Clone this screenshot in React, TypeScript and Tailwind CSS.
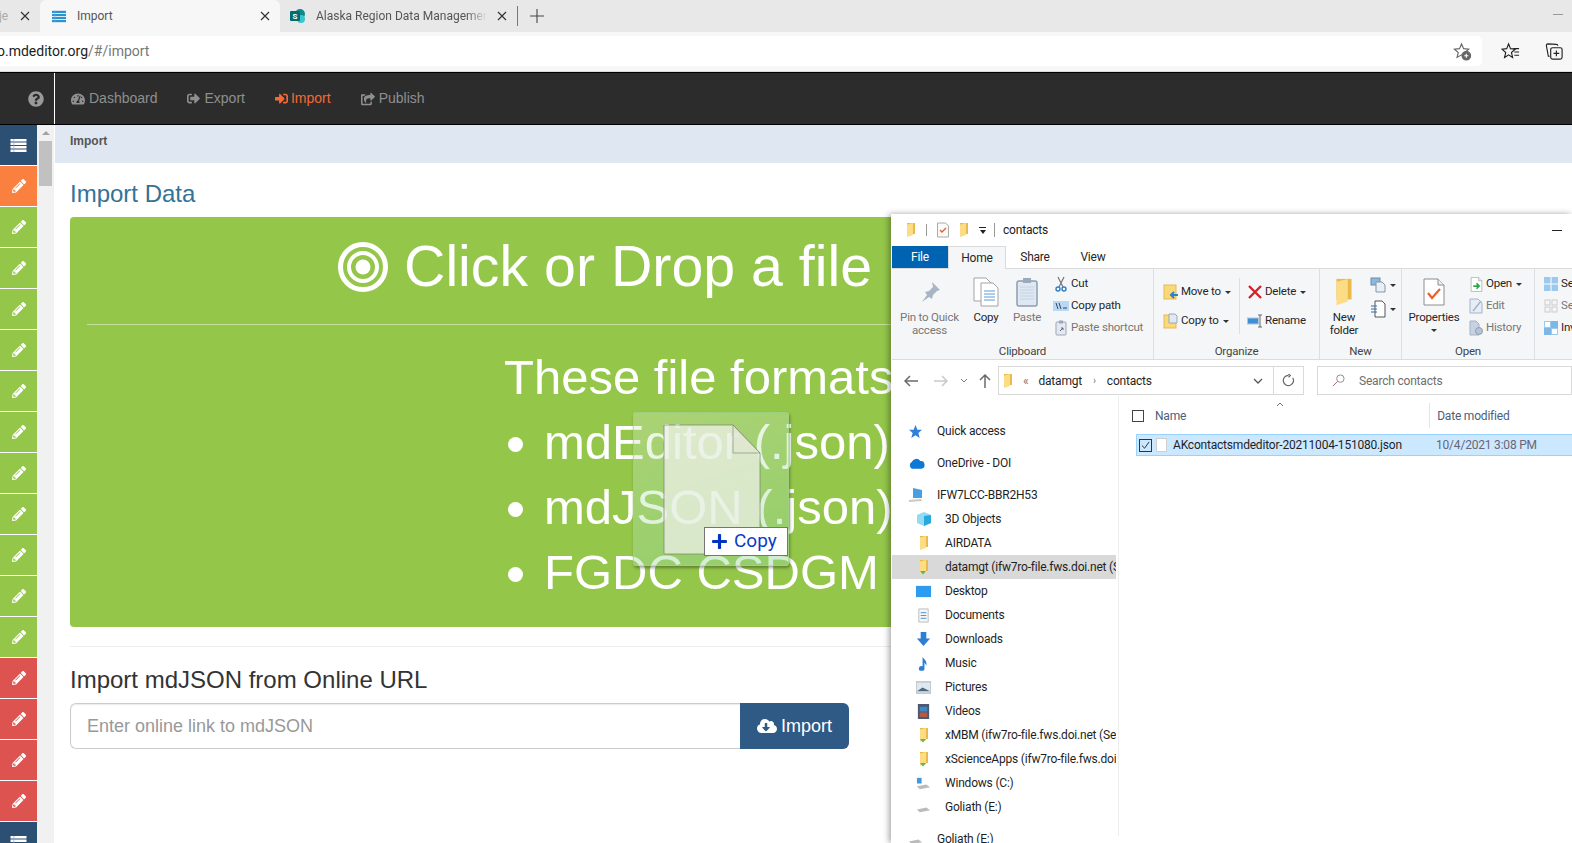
import type { ReactNode } from 'react';
import {
  FaCloudDownloadAlt,
  FaPencilAlt,
  FaPlus,
  FaQuestionCircle,
  FaShareSquare,
  FaSignInAlt,
  FaSignOutAlt,
  FaTachometerAlt,
} from 'react-icons/fa';

const tiles = [
  ...Array(1).fill('orange'),
  ...Array(11).fill('green'),
  ...Array(4).fill('red'),
];

function ListIcon({ className }: { className?: string }) {
  return (
    <svg viewBox="0 0 16 13" className={className} fill="currentColor">
      <rect x="0" y="0" width="16" height="2.500" />
      <rect x="0" y="3.500" width="16" height="2.500" />
      <rect x="0" y="7" width="16" height="2.500" />
      <rect x="0" y="10.500" width="16" height="2.500" />
      <path d="M3 0h.7v13H3z" fill="#7fa7d9" />
    </svg>
  );
}

function Folder({ className = 'w-4 h-4', mapped = false }: { className?: string; mapped?: boolean }) {
  return (
    <svg viewBox="0 0 16 16" className={className}>
      <path d="M4 1h8v11H4z" fill="#e9b949" />
      <path d="M4 2.500 10 1v12l-6 2z" fill="#fcdc85" />
      {mapped && <path d="M4 12h6l-3 3.500z" fill="#5cb85c" />}
    </svg>
  );
}

function CloseIcon() {
  return (
    <svg viewBox="0 0 10 10" className="w-[10px] h-[10px] shrink-0" stroke="#333" strokeWidth="1.2">
      <path d="M1 1l8 8M9 1l-8 8" />
    </svg>
  );
}

function Caret() {
  return <span className="inline-block ml-1 align-middle border-x-[3px] border-t-[3px] border-x-transparent border-t-[#333]" />;
}

function Small({ icon, label, disabled, caret }: { icon: ReactNode; label: string; disabled?: boolean; caret?: boolean }) {
  return (
    <div className={`flex items-center h-[22px] shrink-0 whitespace-nowrap ${disabled ? 'text-[#777]' : 'text-[#262626]'}`}>
      <span className="w-[20px] flex justify-center shrink-0">{icon}</span>
      <span>{label}</span>
      {caret && <Caret />}
    </div>
  );
}

function Large({ icon, lines, width, disabled }: { icon: ReactNode; lines: string[]; width: string; disabled?: boolean }) {
  return (
    <div className={`flex flex-col items-center shrink-0 ${width} ${disabled ? 'text-[#777]' : 'text-[#262626]'}`}>
      <div className="h-[38px] flex items-center justify-center">{icon}</div>
      {lines.map((l) => (
        <div key={l} className="h-[13px] leading-[13px] whitespace-nowrap">{l}</div>
      ))}
    </div>
  );
}

function Group({ label, width, children }: { label: string; width: string; children: ReactNode }) {
  return (
    <div className={`flex flex-col shrink-0 h-full border-r border-[#dcdfe3] ${width}`}>
      <div className="flex flex-1 pt-[4px] min-h-0">{children}</div>
      <div className="h-[18px] leading-[20px] text-center text-[#444]">{label}</div>
    </div>
  );
}

function PaperIcon({ children, className = 'w-[24px] h-[28px]' }: { children?: ReactNode; className?: string }) {
  return (
    <svg viewBox="0 0 24 28" className={className}>
      <path d="M2 1h14l6 6v20H2z" fill="#fff" stroke="#8c8c8c" />
      <path d="M16 1v6h6" fill="#eee" stroke="#8c8c8c" />
      {children}
    </svg>
  );
}

function NavRow({ icon, label, deep, active, mt }: { icon: ReactNode; label: string; deep?: boolean; active?: boolean; mt?: string }) {
  return (
    <div className={`flex items-center h-[24px] whitespace-nowrap overflow-hidden text-[#1f1f1f] ${active ? 'bg-[#d9d9d9]' : ''} ${mt ?? ''} ${deep ? 'pl-[24px]' : 'pl-[16px]'}`}>
      <span className="w-[30px] shrink-0 flex justify-start">{icon}</span>
      <span className="-ml-[1px]">{label}</span>
    </div>
  );
}

function Explorer() {
  return (
    <div className="absolute left-[891px] top-[214px] w-[681px] h-[629px] bg-white shadow-[-2px_0_6px_rgba(0,0,0,0.35)] font-[Roboto] text-[12px] tracking-[-0.2px] overflow-hidden">
      <div className="flex items-center h-[32px] pl-[12px] text-[#1a1a1a]">
        <Folder className="w-[16px] h-[16px]" />
        <span className="ml-[7px] w-px h-[12px] bg-[#999]" />
        <svg viewBox="0 0 14 16" className="ml-[9px] w-[14px] h-[16px]">
          <path d="M1.500 1h8l3 3v11h-11z" fill="#fafafa" stroke="#aaa" />
          <path d="M4 8l2 2 4-4" fill="none" stroke="#e8602c" strokeWidth="1.4" />
        </svg>
        <Folder className="ml-[6px] w-[16px] h-[16px]" />
        <span className="ml-[7px] flex flex-col items-center gap-[2px]">
          <span className="w-[7px] h-px bg-[#222]" />
          <span className="border-x-[3.5px] border-t-[4px] border-x-transparent border-t-[#222]" />
        </span>
        <span className="ml-[8px] w-px h-[14px] bg-[#999]" />
        <span className="ml-[8px]">contacts</span>
        <span className="ml-auto mr-[10px] w-[10px] h-px bg-[#222]" />
      </div>

      <div className="flex h-[23px] ml-[1px] items-stretch border-b border-[#dadbdc]">
        <div className="w-[56px] bg-[#0063b1] text-white flex items-center justify-center">File</div>
        <div className="w-[58px] bg-[#f5f6f7] border-x border-t border-[#dadbdc] -mb-px flex items-center justify-center text-[#262626]">Home</div>
        <div className="w-[58px] flex items-center justify-center text-[#262626]">Share</div>
        <div className="w-[58px] flex items-center justify-center text-[#262626]">View</div>
      </div>

      <div className="flex h-[91px] ml-[1px] bg-[#f5f6f7] border-b border-[#dadbdc] text-[11.5px]">
        <Group label="Clipboard" width="w-[262px]">
          <Large
            width="w-[75px]"
            disabled
            lines={['Pin to Quick', 'access']}
            icon={
              <svg viewBox="0 0 24 24" className="w-[24px] h-[24px]">
                <path d="M14 2l8 8-3 1-4 4-1 4-3-2-7 5 5-7-2-3 4-1 4-4z" fill="#a9b4c4" />
              </svg>
            }
          />
          <Large
            width="w-[38px]"
            lines={['Copy']}
            icon={
              <svg viewBox="0 0 26 30" className="w-[26px] h-[30px]">
                <path d="M1 1h12l5 5v18H1z" fill="#fff" stroke="#a3a3a3" />
                <path d="M8 6h12l5 5v18H8z" fill="#fff" stroke="#a3a3a3" />
                <path d="M11 14h11M11 17h11M11 20h11M11 23h11" stroke="#5b9bd5" />
              </svg>
            }
          />
          <Large
            width="w-[44px]"
            disabled
            lines={['Paste']}
            icon={
              <svg viewBox="0 0 24 30" className="w-[24px] h-[30px]">
                <rect x="2" y="4" width="20" height="25" rx="2" fill="#dfe7f2" stroke="#8d9db3" strokeWidth="1.5" />
                <rect x="8" y="1" width="8" height="5" fill="#9aa9bd" />
                <path d="M5 10h14M5 13h14M5 16h14M5 19h14M5 22h14" stroke="#c5d3e5" />
              </svg>
            }
          />
          <div className="flex flex-col ml-[2px]">
            <Small
              label="Cut"
              icon={
                <svg viewBox="0 0 14 16" className="w-[14px] h-[16px]" fill="none">
                  <path d="M4 1l5 10M10 1L5 11" stroke="#777" strokeWidth="1.2" />
                  <circle cx="4" cy="13" r="2" stroke="#2f80c8" strokeWidth="1.4" />
                  <circle cx="10" cy="13" r="2" stroke="#2f80c8" strokeWidth="1.4" />
                </svg>
              }
            />
            <Small
              label="Copy path"
              icon={
                <svg viewBox="0 0 16 10" className="w-[16px] h-[10px]">
                  <rect width="16" height="10" fill="#b9d8f3" />
                  <path d="M3 2l2 6M6 2l2 6M10 7h4" stroke="#33475e" />
                </svg>
              }
            />
            <Small
              label="Paste shortcut"
              disabled
              icon={
                <svg viewBox="0 0 12 16" className="w-[12px] h-[16px]">
                  <rect x="1" y="2" width="10" height="13" rx="1" fill="#e4e9f0" stroke="#9aa7b8" />
                  <rect x="4" y="0.500" width="4" height="3" fill="#9aa7b8" />
                  <path d="M5 11l3-3M6 8h2v2" stroke="#667" fill="none" />
                </svg>
              }
            />
          </div>
        </Group>

        <Group label="Organize" width="w-[166px]">
          <div className="flex flex-col w-[85px] pl-[7px] pt-[8px] gap-[7px] shrink-0">
            <Small
              label="Move to"
              caret
              icon={
                <svg viewBox="0 0 16 16" className="w-[16px] h-[16px]">
                  <rect x="1" y="1" width="12" height="14" fill="#fbd878" stroke="#e3bb58" />
                  <path d="M15 11H8M11 8l-3 3 3 3" stroke="#2f80c8" strokeWidth="2" fill="none" />
                </svg>
              }
            />
            <Small
              label="Copy to"
              caret
              icon={
                <svg viewBox="0 0 16 16" className="w-[16px] h-[16px]">
                  <rect x="1" y="2" width="12" height="13" fill="#fbd878" stroke="#e3bb58" />
                  <path d="M6 1h6l2 2v7H6z" fill="#dfe9f5" stroke="#9aa7b8" />
                </svg>
              }
            />
          </div>
          <div className="flex flex-col pl-[5px] pt-[3px] mt-[5px] gap-[7px] border-l border-[#dcdfe3] h-[56px]">
            <Small
              label="Delete"
              caret
              icon={
                <svg viewBox="0 0 14 14" className="w-[14px] h-[14px]" stroke="#d1232a" strokeWidth="2.4">
                  <path d="M1 1l12 12M13 1L1 13" />
                </svg>
              }
            />
            <Small
              label="Rename"
              icon={
                <svg viewBox="0 0 16 14" className="w-[16px] h-[14px]">
                  <rect x="0.500" y="4" width="11" height="6" fill="#3d8fd6" stroke="#b4c6da" />
                  <path d="M13 1v12M11 1h4M11 13h4" stroke="#666" />
                </svg>
              }
            />
          </div>
        </Group>

        <Group label="New" width="w-[82px]">
          <Large width="w-[48px]" lines={['New', 'folder']} icon={<Folder className="w-[30px] h-[34px]" />} />
          <div className="flex flex-col pl-[2px] pt-[2px] gap-[4px]">
            <div className="flex items-center h-[20px]">
              <svg viewBox="0 0 16 16" className="w-[16px] h-[16px]">
                <rect x="1" y="1" width="9" height="7" fill="#8db8dc" stroke="#6c8dab" />
                <path d="M6 5h6l3 3v7H6z" fill="#e9eff6" stroke="#8795a5" />
              </svg>
              <Caret />
            </div>
            <div className="flex items-center h-[20px]">
              <svg viewBox="0 0 16 18" className="w-[16px] h-[18px]">
                <path d="M5 1h7l3 3v13H5z" fill="#fff" stroke="#555" />
                <path d="M1 6h6M1 9h6M1 12h6" stroke="#2f6fa8" />
              </svg>
              <Caret />
            </div>
          </div>
        </Group>

        <Group label="Open" width="w-[133px]">
          <div className="flex flex-col items-center w-[64px] shrink-0 text-[#262626]">
            <Large
              width="w-[64px]"
              lines={['Properties']}
              icon={
                <PaperIcon className="w-[24px] h-[30px]">
                  <path d="M6 15l4 5 8-9" fill="none" stroke="#e8602c" strokeWidth="2.2" />
                </PaperIcon>
              }
            />
            <span className="mt-[5px] border-x-[3px] border-t-[3px] border-x-transparent border-t-[#333]" />
          </div>
          <div className="flex flex-col">
            <Small
              label="Open"
              caret
              icon={
                <PaperIcon className="w-[13px] h-[15px]">
                  <path d="M6 17h10M12 12l5 5-5 5" fill="none" stroke="#2aa84a" strokeWidth="3" />
                </PaperIcon>
              }
            />
            <Small
              label="Edit"
              disabled
              icon={
                <svg viewBox="0 0 14 16" className="w-[14px] h-[16px]">
                  <path d="M1 1h8l4 4v10H1z" fill="#e6edf6" stroke="#a4b4c8" />
                  <path d="M4 13l8-10" stroke="#a4b4c8" strokeWidth="1.5" />
                </svg>
              }
            />
            <Small
              label="History"
              disabled
              icon={
                <svg viewBox="0 0 14 16" className="w-[14px] h-[16px]">
                  <path d="M1 1h6l3 3v11H1z" fill="#c6d2e0" stroke="#a4b4c8" />
                  <circle cx="10" cy="11" r="3.500" fill="#b7c4d4" stroke="#8f9fb2" />
                </svg>
              }
            />
          </div>
        </Group>

        <div className="flex flex-col pl-[6px] pt-[4px] overflow-hidden">
          <Small
            label="Select all"
            icon={
              <svg viewBox="0 0 14 14" className="w-[14px] h-[14px]">
                <rect width="14" height="14" fill="#9cc9ee" />
                <path d="M7 0v14M0 7h14" stroke="#fff" />
              </svg>
            }
          />
          <Small
            label="Select none"
            disabled
            icon={
              <svg viewBox="0 0 14 14" className="w-[14px] h-[14px]" fill="none" stroke="#ccc">
                <rect x="1" y="1" width="5" height="5" />
                <rect x="8" y="1" width="5" height="5" />
                <rect x="1" y="8" width="5" height="5" />
                <rect x="8" y="8" width="5" height="5" />
              </svg>
            }
          />
          <Small
            label="Invert selection"
            icon={
              <svg viewBox="0 0 14 14" className="w-[14px] h-[14px]">
                <rect x="7" width="7" height="7" fill="#7db7e8" />
                <rect y="7" width="7" height="7" fill="#7db7e8" />
                <rect x="0.500" y="0.500" width="6" height="6" fill="#fff" stroke="#9cc9ee" />
                <rect x="7.500" y="7.500" width="6" height="6" fill="#fff" stroke="#9cc9ee" />
              </svg>
            }
          />
        </div>
      </div>

      <div className="flex items-start h-[36px] pt-[6px] text-[#333]">
        <div className="flex items-center h-[29px] w-[107px] pl-[13px] shrink-0">
          <svg viewBox="0 0 14 12" className="w-[14px] h-[12px]" stroke="#6b6b6b" strokeWidth="1.5" fill="none">
            <path d="M14 6H1M6 1L1 6l5 5" />
          </svg>
          <svg viewBox="0 0 14 12" className="ml-[16px] w-[14px] h-[12px]" stroke="#c9c9c9" strokeWidth="1.5" fill="none">
            <path d="M0 6h13M8 1l5 5-5 5" />
          </svg>
          <svg viewBox="0 0 8 5" className="ml-[12px] w-[8px] h-[5px]" stroke="#777" fill="none">
            <path d="M1 1l3 3 3-3" />
          </svg>
          <svg viewBox="0 0 12 14" className="ml-[11px] w-[12px] h-[14px]" stroke="#6b6b6b" strokeWidth="1.5" fill="none">
            <path d="M6 14V1M1 6l5-5 5 5" />
          </svg>
        </div>
        <div className="flex items-center w-[306px] h-[29px] border border-[#d9d9d9] shrink-0">
          <Folder className="ml-[1px] w-[16px] h-[16px]" />
          <span className="ml-[7px] text-[#777]">«</span>
          <span className="ml-[10px] text-[#1f1f1f]">datamgt</span>
          <span className="ml-[11px] text-[#777] text-[10px]">›</span>
          <span className="ml-[11px] text-[#1f1f1f]">contacts</span>
          <svg viewBox="0 0 10 6" className="ml-auto mr-[10px] w-[10px] h-[6px]" stroke="#555" strokeWidth="1.3" fill="none">
            <path d="M1 1l4 4 4-4" />
          </svg>
          <span className="w-[30px] h-full border-l border-[#d9d9d9] flex items-center justify-center">
            <svg viewBox="0 0 14 14" className="w-[13px] h-[13px]" stroke="#666" strokeWidth="1.3" fill="none">
              <path d="M11.500 4A5.500 5.500 0 1 1 7 1.500M7 0l2 1.700L7 3.500" />
            </svg>
          </span>
        </div>
        <div className="flex items-center ml-[13px] flex-1 h-[29px] border border-[#d9d9d9] pl-[14px] text-[#6e6e6e]">
          <svg viewBox="0 0 14 14" className="w-[13px] h-[13px]" stroke="#888" fill="none">
            <circle cx="9" cy="5" r="4" />
            <path d="M6 8l-5 5" stroke="#b56" />
          </svg>
          <span className="ml-[14px]">Search contacts</span>
        </div>
      </div>

      <div className="flex">
        <div className="w-[228px] shrink-0 pl-[1px] border-r border-[#eee] h-[440px]">
          <div className="pt-[23px] pr-[2px]">
            <NavRow
              label="Quick access"
              icon={
                <svg viewBox="0 0 16 16" className="w-[15px] h-[15px]">
                  <path d="M8 1l2 5h5l-4 3.500L12.500 15 8 12l-4.500 3L5 9.500 1 6h5z" fill="#2f80d8" />
                </svg>
              }
            />
            <NavRow
              mt="mt-[8px]"
              label="OneDrive - DOI"
              icon={
                <svg viewBox="0 0 18 12" className="w-[17px] h-[12px]">
                  <path d="M4 12a4 4 0 0 1 0-7 5 5 0 0 1 9-1 4 4 0 0 1 1 8z" fill="#0f78d4" />
                </svg>
              }
            />
            <NavRow
              mt="mt-[8px]"
              label="IFW7LCC-BBR2H53"
              icon={
                <svg viewBox="0 0 16 16" className="w-[16px] h-[16px]">
                  <path d="M5 1l9 2v8H5z" fill="#4a9fe0" />
                  <path d="M1 13l12-1 1 2-13 1z" fill="#c9c9c9" />
                </svg>
              }
            />
            <NavRow
              deep
              label="3D Objects"
              icon={
                <svg viewBox="0 0 16 16" className="w-[16px] h-[16px]">
                  <path d="M8 1l7 3v8l-7 3-7-3V4z" fill="#8fdcf3" />
                  <path d="M8 5l7-1v8l-7 3z" fill="#28a8dc" />
                </svg>
              }
            />
            <NavRow deep label="AIRDATA" icon={<Folder />} />
            <NavRow deep active label="datamgt (ifw7ro-file.fws.doi.net (Server))" icon={<Folder mapped />} />
            <NavRow
              deep
              label="Desktop"
              icon={
                <svg viewBox="0 0 16 16" className="w-[15px] h-[15px]">
                  <rect y="2" width="16" height="12" fill="#2e9bef" />
                </svg>
              }
            />
            <NavRow
              deep
              label="Documents"
              icon={
                <svg viewBox="0 0 16 16" className="w-[15px] h-[15px]">
                  <path d="M3 1h10v14H3z" fill="#f4f6f8" stroke="#bbb" />
                  <path d="M5 5h6M5 8h6M5 11h6" stroke="#4a8fc8" />
                </svg>
              }
            />
            <NavRow
              deep
              label="Downloads"
              icon={
                <svg viewBox="0 0 16 16" className="w-[15px] h-[15px]">
                  <path d="M5 0h6v7h4l-7 8-7-8h4z" fill="#2a7fd5" />
                </svg>
              }
            />
            <NavRow
              deep
              label="Music"
              icon={
                <svg viewBox="0 0 16 16" className="w-[15px] h-[15px]">
                  <path d="M7 1c2 3 5 4 4 9l-2-3v6a3 2.500 0 1 1-2-2z" fill="#2a7fd5" />
                </svg>
              }
            />
            <NavRow
              deep
              label="Pictures"
              icon={
                <svg viewBox="0 0 16 16" className="w-[15px] h-[15px]">
                  <rect y="2" width="16" height="12" fill="#dfe8f0" stroke="#aaa" />
                  <path d="M1 12l6-4 8 4z" fill="#4a6a82" />
                </svg>
              }
            />
            <NavRow
              deep
              label="Videos"
              icon={
                <svg viewBox="0 0 16 16" className="w-[15px] h-[15px]">
                  <rect x="2" y="0" width="12" height="16" fill="#4a5a70" />
                  <rect x="4" y="3" width="8" height="5" fill="#3f88c8" />
                  <rect x="4" y="9" width="8" height="5" fill="#b55a4a" />
                </svg>
              }
            />
            <NavRow deep label="xMBM (ifw7ro-file.fws.doi.net (Server))" icon={<Folder mapped />} />
            <NavRow deep label="xScienceApps (ifw7ro-file.fws.doi.net (Server))" icon={<Folder mapped />} />
            <NavRow
              deep
              label="Windows (C:)"
              icon={
                <svg viewBox="0 0 16 16" className="w-[15px] h-[15px]">
                  <path d="M1 2h5v6H1z" fill="#3f9ae0" />
                  <path d="M1 11l10-2 4 3-11 2z" fill="#bbb" />
                </svg>
              }
            />
            <NavRow
              deep
              label="Goliath (E:)"
              icon={
                <svg viewBox="0 0 16 16" className="w-[15px] h-[15px]">
                  <path d="M1 10l10-2 4 3-11 2z" fill="#bbb" />
                </svg>
              }
            />
            <NavRow
              mt="mt-[8px]"
              label="Goliath (E:)"
              icon={
                <svg viewBox="0 0 16 16" className="w-[15px] h-[15px]">
                  <path d="M1 10l10-2 4 3-11 2z" fill="#bbb" />
                </svg>
              }
            />
          </div>
        </div>

        <div className="flex-1 min-w-0 pt-[7px] pl-[13px]">
          <div className="flex items-center h-[25px] text-[#4c607a] relative">
            <span className="w-[12px] h-[12px] border border-[#444] shrink-0" />
            <span className="ml-[11px]">Name</span>
            <svg viewBox="0 0 8 5" className="absolute left-[144px] -top-[1px] w-[8px] h-[5px]" stroke="#777" fill="none">
              <path d="M1 4l3-3 3 3" />
            </svg>
            <span className="ml-[243px] pl-[7px] h-full flex items-center border-l border-[#e5e5e5]">Date modified</span>
          </div>
          <div className="flex items-center h-[22px] mt-[6px] ml-[4px] bg-[#cce8ff] border border-[#99d1ff] border-r-0">
            <span className="ml-[2px] w-[13px] h-[13px] border border-[#333] flex items-center justify-center shrink-0">
              <svg viewBox="0 0 10 10" className="w-[9px] h-[9px]" stroke="#222" fill="none">
                <path d="M1 5l3 3 5-7" />
              </svg>
            </span>
            <span className="ml-[4px] w-[11px] h-[14px] bg-white border border-[#cfcfcf] shrink-0" />
            <span className="ml-[6px] w-[263px] text-[#1f1f1f] whitespace-nowrap">AKcontactsmdeditor-20211004-151080.json</span>
            <span className="text-[#667]">10/4/2021 3:08 PM</span>
          </div>
        </div>
      </div>
    </div>
  );
}

function DragGhost() {
  return (
    <div className="absolute left-[633px] top-[412px] w-[156px] h-[154px] rounded-[3px] bg-[linear-gradient(160deg,rgba(215,235,195,0.35),rgba(150,215,150,0.45))] border border-[#9fd08a]/60 shadow-[1px_2px_3px_rgba(0,0,0,0.35)]">
      <svg viewBox="0 0 98 131" className="absolute left-[29px] top-[11px] w-[98px] h-[131px]">
        <path d="M1 1h69l27 28v101H1z" fill="rgba(238,240,232,0.75)" stroke="rgba(120,130,110,0.7)" />
        <path d="M70 1v28h27z" fill="rgba(225,230,210,0.7)" stroke="rgba(120,130,110,0.6)" />
      </svg>
      <div className="absolute left-[70px] top-[114px] w-[84px] h-[29px] bg-white border border-[#767676] flex items-center pl-[6px] font-[Roboto] text-[19px] text-[#0a3cc8]">
        <FaPlus className="w-[17px] h-[17px] text-[#0033c4]" />
        <span className="ml-[6px]">Copy</span>
      </div>
    </div>
  );
}

export default function App() {
  return (
    <div className="relative w-[1572px] h-[843px] overflow-hidden bg-white font-['Liberation_Sans',sans-serif]">
      <div className="flex items-end h-[32px] bg-[#e8e8e8] font-[Roboto] text-[12px] text-[#555]">
        <div className="flex items-center w-[40px] h-full">
          <span className="-ml-[1px] text-[#aaa]">je</span>
          <span className="ml-[12px]"><CloseIcon /></span>
        </div>
        <div className="flex items-center w-[240px] h-full bg-[#f7f7f7] rounded-t-[6px] pl-[12px] pr-[10px]">
          <ListIcon className="w-[14px] h-[13px] text-[#2b93d1]" />
          <span className="ml-[11px]">Import</span>
          <span className="ml-auto"><CloseIcon /></span>
        </div>
        <div className="flex items-center h-full pl-[10px] w-[232px]">
          <svg viewBox="0 0 16 16" className="w-[16px] h-[16px] shrink-0">
            <circle cx="10" cy="6" r="5" fill="#0f8a8a" />
            <circle cx="11" cy="11" r="4" fill="#37c6d0" />
            <rect x="0" y="3" width="10" height="10" rx="1" fill="#036c70" />
            <text x="5" y="11" fontSize="8" fontWeight="700" textAnchor="middle" fill="#fff">S</text>
          </svg>
          <span className="ml-[10px] w-[171px] overflow-hidden whitespace-nowrap [mask-image:linear-gradient(to_right,black_88%,transparent)]">Alaska Region Data Management</span>
          <span className="ml-[10px]"><CloseIcon /></span>
        </div>
        <span className="self-center ml-[5px] w-px h-[20px] bg-[#777]" />
        <svg viewBox="0 0 14 14" className="self-center ml-[12px] w-[14px] h-[14px]" stroke="#444" strokeWidth="1.1">
          <path d="M7 0v14M0 7h14" />
        </svg>
        <span className="self-center ml-auto mr-[9px] -mt-[4px] w-[10px] h-px bg-[#999]" />
      </div>

      <div className="flex items-start h-[40px] pt-[4px] bg-[#f7f7f7] border-b border-[#dcdcdc]">
        <div className="flex items-center w-[1482px] h-[30px] bg-white rounded-r-[5px] font-[Roboto] text-[14px] overflow-hidden whitespace-nowrap">
          <span className="-ml-[3px] text-[#222]">o.mdeditor.org</span>
          <span className="text-[#777]">/#/import</span>
          <svg viewBox="0 0 20 20" className="ml-auto mr-[10px] w-[19px] h-[19px]" stroke="#666" fill="none" strokeWidth="1.2">
            <path d="M9 2l2.200 5 5.300.5-4 3.500 1.200 5.200L9 13.500l-4.700 2.700 1.200-5.200-4-3.500 5.300-.5z" />
            <circle cx="14" cy="14.500" r="4.500" fill="#666" />
            <path d="M14 12.300v4.400M11.800 14.500h4.400" stroke="#fff" />
          </svg>
        </div>
        <svg viewBox="0 0 20 20" className="ml-[19px] mt-[6px] w-[19px] h-[19px]" stroke="#222" fill="none" strokeWidth="1.2">
          <path d="M8 2l2 5 5 .5-4 3.500 1.200 5.200L8 13.500l-4.200 2.700L5 11 1 7.500 6 7z" />
          <path d="M13 7h6M14 10.500h5M14 14h5" />
        </svg>
        <svg viewBox="0 0 20 20" className="ml-[25px] mt-[6px] w-[19px] h-[19px]" stroke="#222" fill="none" strokeWidth="1.2">
          <path d="M5 15H3.500L1.500 4c-.2-1 .3-2 1.500-2l9 .5c1 0 1.500 .8 1.500 1.500" />
          <rect x="6" y="6" width="12" height="12" rx="2" fill="#f7f7f7" />
          <path d="M12 9v6M9 12h6" />
        </svg>
      </div>

      <div className="flex h-[53px] bg-[#2c2c2c] border-y border-black text-[14px] text-[#8f8f8f]">
        <div className="flex items-center justify-end w-[55px] pr-[10px] border-r border-white shrink-0">
          <FaQuestionCircle className="w-[16px] h-[16px] text-[#9a9a9a]" />
        </div>
        <nav className="flex items-center pl-[16px]">
          <span className="flex items-center gap-[4px]"><FaTachometerAlt className="w-[14px] h-[14px]" />Dashboard</span>
          <span className="flex items-center gap-[5px] ml-[29px]"><FaSignOutAlt className="w-[13px] h-[13px]" />Export</span>
          <span className="flex items-center gap-[3px] ml-[30px] text-[#f26a36]"><FaSignInAlt className="w-[13px] h-[13px]" />Import</span>
          <span className="flex items-center gap-[4px] ml-[30px]"><FaShareSquare className="w-[14px] h-[14px]" />Publish</span>
        </nav>
      </div>

      <div className="flex h-[718px] overflow-hidden">
        <aside className="w-[37px] shrink-0 flex flex-col gap-px overflow-hidden">
          <div className="h-[40px] shrink-0 bg-[#2c4f74] flex items-center justify-center">
            <ListIcon className="w-[17px] h-[13px] text-white" />
          </div>
          {tiles.map((c, i) => (
            <div
              key={i}
              className={`h-[40px] shrink-0 flex items-center justify-center ${c === 'orange' ? 'bg-[#f9803f]' : c === 'green' ? 'bg-[#94c64a]' : 'bg-[#dd5350]'}`}
            >
              <FaPencilAlt className="w-[14px] h-[14px] text-white" />
            </div>
          ))}
          <div className="h-[40px] shrink-0 bg-[#2c4f74] flex items-center justify-center">
            <ListIcon className="w-[17px] h-[13px] text-white" />
          </div>
        </aside>
        <div className="w-[17px] shrink-0 bg-[#f1f1f1] pl-[2px] pr-[2px] flex flex-col items-center">
          <span className="mt-[6px] border-x-[4px] border-b-[4px] border-x-transparent border-b-[#a3a3a3]" />
          <span className="mt-[6px] w-full h-[45px] bg-[#c1c1c1]" />
        </div>

        <main className="flex-1 min-w-0 ml-px">
          <div className="h-[38px] bg-[#dfe8f2] pl-[15px] pb-[7px] flex items-center text-[12px] font-bold text-[#555]">Import</div>
          <div className="pl-[15px] pr-[19px]">
            <h1 className="mt-[18px] h-[26px] leading-[26px] text-[24px] text-[#337299]">Import Data</h1>
            <div className="mt-[10px] h-[410px] rounded-[4px] bg-[#94c64a] text-white">
              <div className="mx-[17px] h-[108px] pl-[251px] pb-[7px] flex items-center border-b border-[#c4df9a] text-[57.300px] leading-none">
                <svg viewBox="0 0 50 50" className="w-[50px] h-[50px] mr-[16px]" fill="none" stroke="currentColor">
                  <circle cx="25" cy="25" r="22.500" strokeWidth="5" />
                  <circle cx="25" cy="25" r="14" strokeWidth="4" />
                  <circle cx="25" cy="25" r="7.500" fill="currentColor" stroke="none" />
                </svg>
                <span>Click or Drop a file</span>
              </div>
              <div className="pl-[434px] pt-[20px] text-[49px] leading-[65px]">
                <div>These file formats are accepted:</div>
                <ul className="list-disc pl-[40px]">
                  <li>mdEditor (.json)</li>
                  <li>mdJSON (.json)</li>
                  <li>FGDC CSDGM (.xml)</li>
                </ul>
              </div>
            </div>
            <hr className="mt-[19px] border-[#eee]" />
            <h2 className="mt-[20px] text-[24px] leading-[26px] text-[#333]">Import mdJSON from Online URL</h2>
            <div className="flex mt-[10px] w-[779px] h-[46px] text-[18px]">
              <div className="flex-1 flex items-center pl-[16px] border border-[#ccc] border-r-0 rounded-l-[6px] text-[#999] shadow-[inset_0_1px_1px_rgba(0,0,0,0.08)]">Enter online link to mdJSON</div>
              <div className="w-[109px] flex items-center justify-center gap-[4px] bg-[#2f5a85] rounded-r-[6px] text-white">
                <FaCloudDownloadAlt className="w-[20px] h-[20px]" />Import
              </div>
            </div>
          </div>
        </main>
      </div>

      <DragGhost />
      <Explorer />
    </div>
  );
}
